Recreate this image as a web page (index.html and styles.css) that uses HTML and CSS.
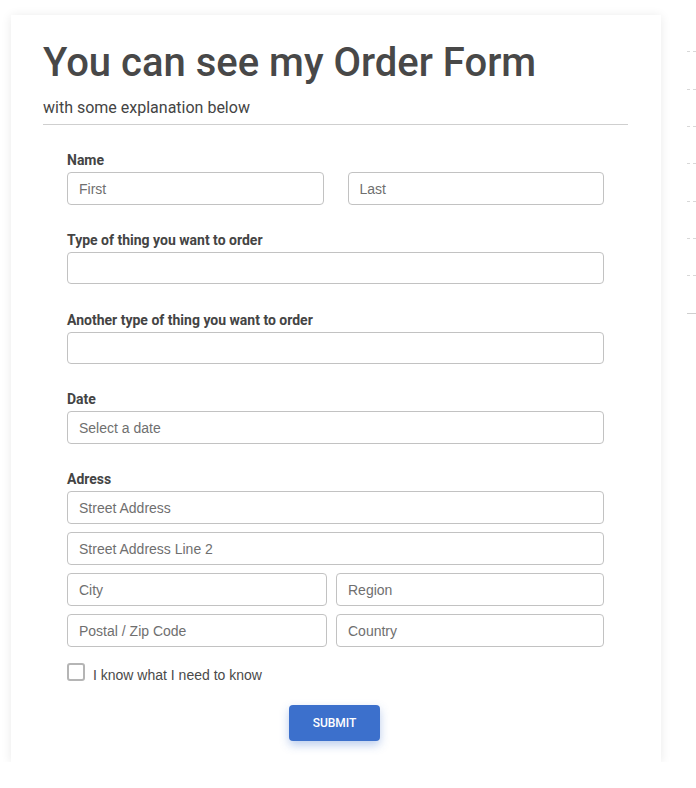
FILE: index.html
```html
<!DOCTYPE html>
<html>
<head>
<meta charset="utf-8">
<link rel="stylesheet" href="styles.css">
</head>
<body>
<div class="page">
  <main class="card">
    <h1 class="title">You can see my Order Form</h1>
    <p class="subtitle">with some explanation below</p>
    <hr class="rule">
    <form class="form">
      <div class="group">
        <label class="label">Name</label>
        <div class="row row-name">
          <input class="input" placeholder="First">
          <input class="input" placeholder="Last">
        </div>
      </div>
      <div class="group">
        <label class="label">Type of thing you want to order</label>
        <input class="input">
      </div>
      <div class="group">
        <label class="label">Another type of thing you want to order</label>
        <input class="input">
      </div>
      <div class="group">
        <label class="label">Date</label>
        <input class="input" placeholder="Select a date">
      </div>
      <div class="group group-address">
        <label class="label">Adress</label>
        <div class="address">
          <input class="input" placeholder="Street Address">
          <input class="input" placeholder="Street Address Line 2">
          <div class="row row-split">
            <input class="input" placeholder="City">
            <input class="input" placeholder="Region">
          </div>
          <div class="row row-split">
            <input class="input" placeholder="Postal / Zip Code">
            <input class="input" placeholder="Country">
          </div>
        </div>
      </div>
      <label class="check">
        <span class="box"></span>
        <span class="check-text">I know what I need to know</span>
      </label>
      <div class="actions">
        <button type="button" class="submit">SUBMIT</button>
      </div>
    </form>
  </main>
  <aside class="side">
    <ul class="side-list">
      <li class="side-item"></li>
      <li class="side-item"></li>
      <li class="side-item"></li>
      <li class="side-item"></li>
      <li class="side-item"></li>
      <li class="side-item"></li>
      <li class="side-item"></li>
      <li class="side-item side-item-last"></li>
    </ul>
  </aside>
</div>
</body>
</html>
```
FILE: styles.css
```css
html, body {
  margin: 0;
  padding: 0;
  background: #fff;
  overflow-x: hidden;
}
.page {
  display: flex;
  align-items: flex-start;
  padding: 15px 0 0 11px;
  gap: 26px;
}
.card {
  width: 650px;
  flex: none;
  box-sizing: border-box;
  padding: 24px 33px 21px 32px;
  background: #fff;
  box-shadow: 0 1px 10px rgba(0, 0, 0, 0.09);
  font-family: Roboto, "Liberation Sans", sans-serif;
  color: #444;
}
.title {
  margin: 0;
  font-size: 40px;
  line-height: 48px;
  font-weight: 500;
  color: #484848;
}
.subtitle {
  margin: 11px 0 0;
  font-size: 16px;
  line-height: 19px;
  color: #444;
}
.rule {
  margin: 7px 0 0;
  border: 0;
  border-top: 1px solid #cfcfcf;
  height: 0;
}
.form {
  margin: 27px 24px 0 24px;
}
.group {
  margin-bottom: 27.25px;
}
.label {
  display: block;
  font-size: 14px;
  line-height: 17px;
  font-weight: 700;
  color: #444;
  margin-bottom: 3px;
}
.input {
  display: block;
  width: 100%;
  box-sizing: border-box;
  height: 32.5px;
  margin: 0;
  padding: 1px 11px 0;
  border: 1px solid #c2c2c2;
  border-radius: 4px;
  background: #fff;
  font-family: "Liberation Sans", Arial, sans-serif;
  font-size: 14px;
  color: #444;
  outline: none;
}
.input::placeholder {
  color: #6f6f6f;
}
.row {
  display: grid;
}
.row-name {
  grid-template-columns: 1fr 1fr;
  column-gap: 24px;
}
.row-split {
  grid-template-columns: 260px 1fr;
  column-gap: 9px;
}
.address {
  display: flex;
  flex-direction: column;
  gap: 8.5px;
}
.group-address {
  margin-bottom: 16.5px;
}
.check {
  display: flex;
  align-items: center;
  gap: 8px;
  height: 18px;
}
.box {
  width: 18px;
  height: 18px;
  box-sizing: border-box;
  border: 2px solid #b5b5b5;
  border-radius: 3px;
  flex: none;
}
.check-text {
  font-family: "Liberation Sans", Arial, sans-serif;
  font-size: 14px;
  color: #4a4a4a;
  padding-top: 5px;
}
.actions {
  display: flex;
  justify-content: center;
  margin-top: 24px;
  padding-right: 2px;
}
.submit {
  width: 91px;
  height: 36px;
  border: 0;
  border-radius: 4px;
  background: #3c70cc;
  color: #fff;
  font-family: Roboto, "Liberation Sans", sans-serif;
  font-size: 12px;
  font-weight: 500;
  box-shadow: 0 4px 10px rgba(60, 112, 204, 0.35);
}
.side {
  flex: 1;
  min-width: 0;
}
.side-list {
  list-style: none;
  margin: 0;
  padding: 0;
}
.side-item {
  height: 36.33px;
  border-bottom: 1px dashed #d8d8d8;
}
.side-item-last {
  border-bottom: 1px solid #cfcfcf;
}
```
